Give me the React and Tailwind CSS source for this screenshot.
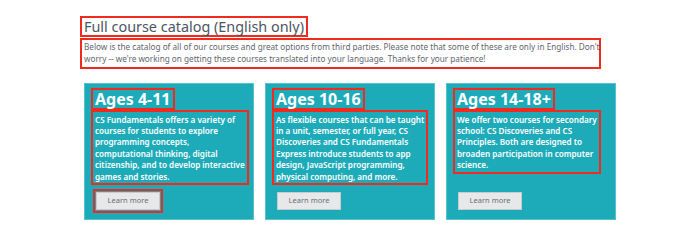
import React from 'react';

const cards = [
    {
        title: 'Ages 4-11',
        lines: [
            'CS Fundamentals offers a variety of',
            'courses for students to explore',
            'programming concepts,',
            'computational thinking, digital',
            'citizenship, and to develop interactive',
            'games and stories.',
        ],
        outlined: true,
    },
    {
        title: 'Ages 10-16',
        lines: [
            'As flexible courses that can be taught',
            'in a unit, semester, or full year, CS',
            'Discoveries and CS Fundamentals',
            'Express introduce students to app',
            'design, JavaScript programming,',
            'physical computing, and more.',
        ],
    },
    {
        title: 'Ages 14-18+',
        lines: [
            'We offer two courses for secondary',
            'school: CS Discoveries and CS',
            'Principles. Both are designed to',
            'broaden participation in computer',
            'science.',
        ],
    },
];

const CourseCard = ({ card }) => (
    <div className="w-[170px] h-[137px] bg-[#1eabb9] border border-[#55c3cd] flex flex-col px-[6px] pt-[4px] pb-[9px]">
        <div className="self-start border-2 border-[#f22a1e] px-[2px] leading-[18px] text-[16px] font-bold text-white">
            {card.title}
        </div>
        <div className="self-start border-2 border-[#f22a1e] px-[2px] pt-[2px] pb-[1px] text-[8.1px] leading-[11.4px] font-semibold text-white">
            {card.lines.map((line, i) => (
                <div key={i} className="whitespace-nowrap">{line}</div>
            ))}
        </div>
        <button
            className={`mt-auto ml-[5px] w-[64px] h-[18px] bg-[#e7e8ea] border border-[#c9cccf] text-[7.5px] text-[#6b6f73] ${card.outlined ? 'outline-2 outline-[#f22a1e] outline-offset-[1px]' : ''}`}
        >
            Learn more
        </button>
    </div>
);

export default function App() {
    return (
        <div className="w-[700px] h-[243px] bg-white pl-[80px] pt-[16px]" style={{ fontFamily: '"Noto Sans", "Liberation Sans", sans-serif' }}>
            <h2 className="block w-fit border-2 border-[#f22a1e] px-[2px] text-[14.4px] leading-[17px] text-[#4a5563] font-normal">
                Full course catalog (English only)
            </h2>
            <p className="w-[521px] mt-[1px] border-2 border-[#f22a1e] px-[2px] py-[1px] text-[8.2px] leading-[12.3px] text-[#5f6670]">
                <span className="block whitespace-nowrap">Below is the catalog of all of our courses and great options from third parties. Please note that some of these are only in English. Don't</span>
                <span className="block whitespace-nowrap">worry -- we're working on getting these courses translated into your language. Thanks for your patience!</span>
            </p>
            <div className="flex gap-[11px] ml-[4px] mt-[14px]">
                {cards.map((card) => (
                    <CourseCard key={card.title} card={card} />
                ))}
            </div>
        </div>
    );
}
